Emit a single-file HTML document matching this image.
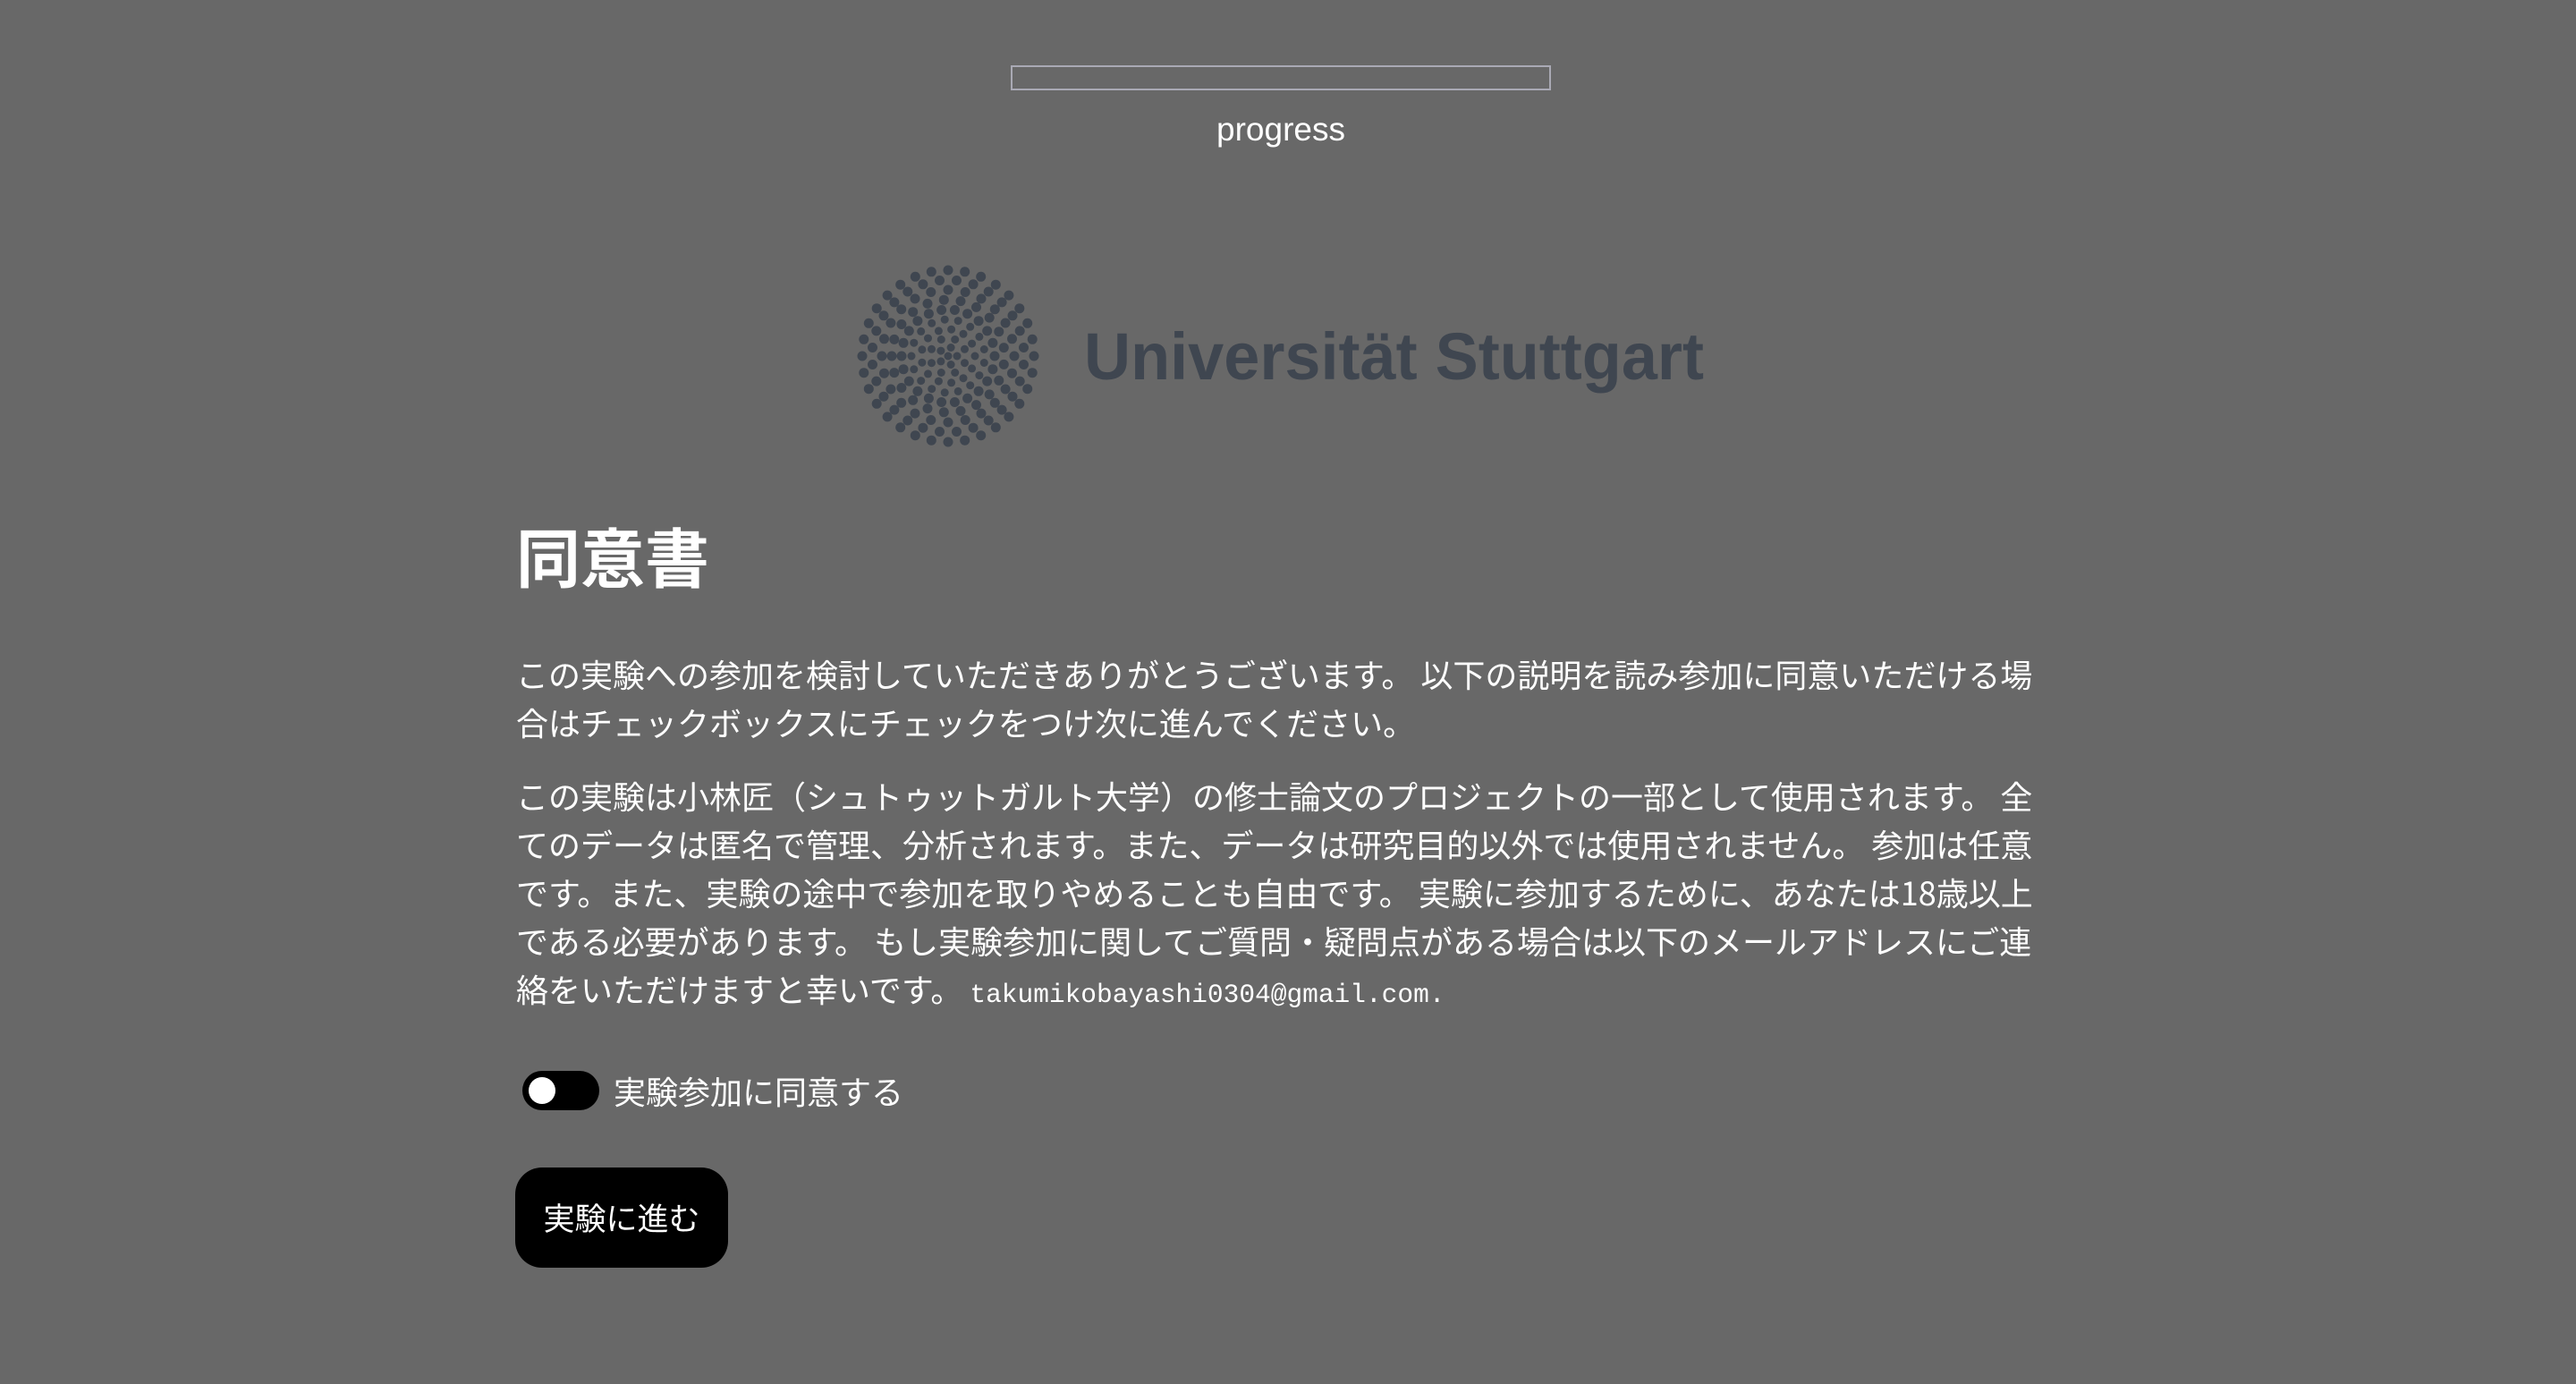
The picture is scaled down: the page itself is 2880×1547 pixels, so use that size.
<!DOCTYPE html>
<html><head><meta charset="utf-8"><style>
html,body{margin:0;padding:0;width:2880px;height:1547px;overflow:hidden;background:#686868;}
body{position:relative;font-family:"Liberation Sans","Noto Sans CJK JP",sans-serif;color:#fff;}
.abs{position:absolute;white-space:nowrap;}
.bar{left:1130px;top:73px;width:600px;height:24px;border:2px solid #a9a9b4;}
.prog{left:1130px;width:604px;top:118px;text-align:center;font-size:37px;line-height:54px;}
h1{position:absolute;left:577px;top:580px;margin:0;font-size:72px;font-weight:bold;line-height:80px;font-family:"Noto Sans CJK JP",sans-serif;}
.t{font-size:36px;line-height:54px;font-family:"Noto Sans CJK JP",sans-serif;left:577px;}
.m{font-family:"Liberation Mono",monospace;font-size:29.5px;}
.tog{left:584px;top:1197px;width:86px;height:44px;border-radius:22px;background:#000;}
.tog:after{content:"";position:absolute;left:7px;top:7px;width:30px;height:30px;border-radius:50%;background:#fff;}
.btn{left:576px;top:1305px;width:238px;height:112px;border-radius:30px;background:#000;font-size:35px;line-height:112px;text-align:center;font-family:"Noto Sans CJK JP",sans-serif;}
</style></head><body>
<div class="abs bar"></div>
<div class="abs prog">progress</div>
<svg class="abs" style="left:0;top:0" width="2880" height="560">
<g id="dots" fill="#3f4650"></g>
<text x="1212" y="424" font-family="Liberation Sans" font-weight="bold" font-size="74" fill="#3f4650" textLength="693" lengthAdjust="spacingAndGlyphs">Universität Stuttgart</text>
</svg>
<script>
(function(){var g=document.getElementById('dots'),cx=1060,cy=398,s='';
var rings=[96,85,74,63,52,41,30,20,10];
rings.forEach(function(r,i){var n=Math.max(5,Math.round(2*Math.PI*r/(i<4?19:15)));for(var k=0;k<n;k++){var a=2*Math.PI*k/n+(i%2)*Math.PI/n;s+='<circle cx="'+(cx+r*Math.cos(a)).toFixed(1)+'" cy="'+(cy+r*Math.sin(a)).toFixed(1)+'" r="'+(i<5?5.5:4.5)+'"/>';}});
g.innerHTML=s+'<circle cx="'+cx+'" cy="'+cy+'" r="4.5"/>';})();
</script>
<h1>同意書</h1>
<div class="abs t" style="top:726px">この実験への参加を検討していただきありがとうございます。 以下の説明を読み参加に同意いただける場</div>
<div class="abs t" style="top:780px">合はチェックボックスにチェックをつけ次に進んでください。</div>
<div class="abs t" style="top:862px">この実験は小林匠（シュトゥットガルト大学）の修士論文のプロジェクトの一部として使用されます。 全</div>
<div class="abs t" style="top:916px">てのデータは匿名で管理、分析されます。また、データは研究目的以外では使用されません。 参加は任意</div>
<div class="abs t" style="top:970px">です。また、実験の途中で参加を取りやめることも自由です。 実験に参加するために、あなたは18歳以上</div>
<div class="abs t" style="top:1024px">である必要があります。 もし実験参加に関してご質問・疑問点がある場合は以下のメールアドレスにご連</div>
<div class="abs t" style="top:1078px">絡をいただけますと幸いです。 <span class="m">takumikobayashi0304@gmail.com.</span></div>
<div class="abs tog"></div>
<div class="abs t" style="left:686px;top:1192px">実験参加に同意する</div>
<div class="abs btn">実験に進む</div>
</body></html>
